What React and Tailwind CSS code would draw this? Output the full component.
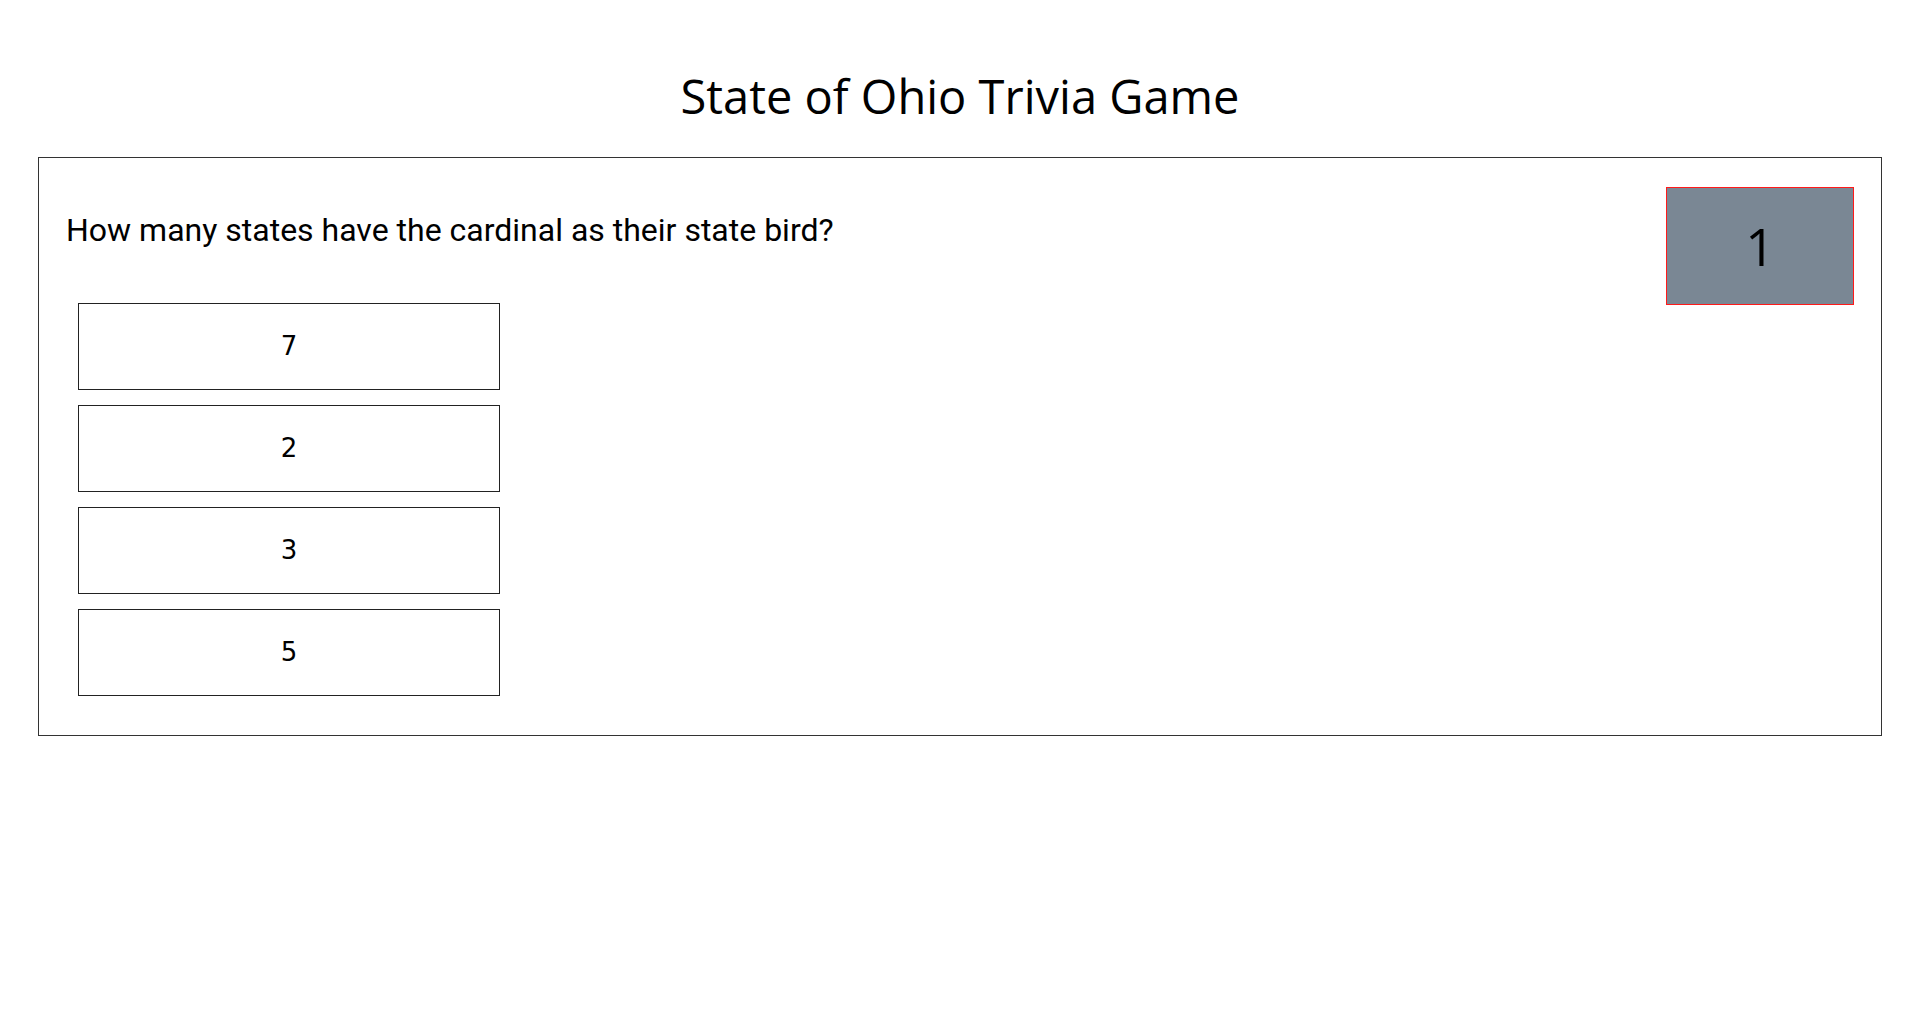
export default function App() {
    const answers = ["7", "2", "3", "5"];

    return (
        <div className="min-h-screen bg-white text-black">
            <h1
                className="pt-[65px] text-center text-[47px] font-normal leading-[63px]"
                style={{ fontFamily: '"Open Sans", sans-serif' }}
            >
                State of Ohio Trivia Game
            </h1>

            <div className="mx-[38px] mt-[29px] flex justify-between border border-[#333] px-[27px] pt-[29px] pb-[39px]">
                <div className="flex flex-col">
                    <h2
                        className="mt-[25px] text-[32px] font-normal leading-[37px]"
                        style={{ fontFamily: 'Roboto, sans-serif' }}
                    >
                        How many states have the cardinal as their state bird?
                    </h2>
                    <div className="mt-[54px] ml-[12px] flex flex-col gap-[15px]">
                        {answers.map((a) => (
                            <button
                                key={a}
                                className="flex h-[87px] w-[422px] items-center justify-center border border-[#222] bg-white text-[26px]"
                                style={{ fontFamily: '"DejaVu Sans", sans-serif' }}
                            >
                                {a}
                            </button>
                        ))}
                    </div>
                </div>

                <div
                    className="flex h-[118px] w-[188px] items-center justify-center border border-[#ff1a1a] bg-[#7a8794] text-[52px]"
                    style={{ fontFamily: '"Open Sans", sans-serif' }}
                >
                    1
                </div>
            </div>
        </div>
    );
}
